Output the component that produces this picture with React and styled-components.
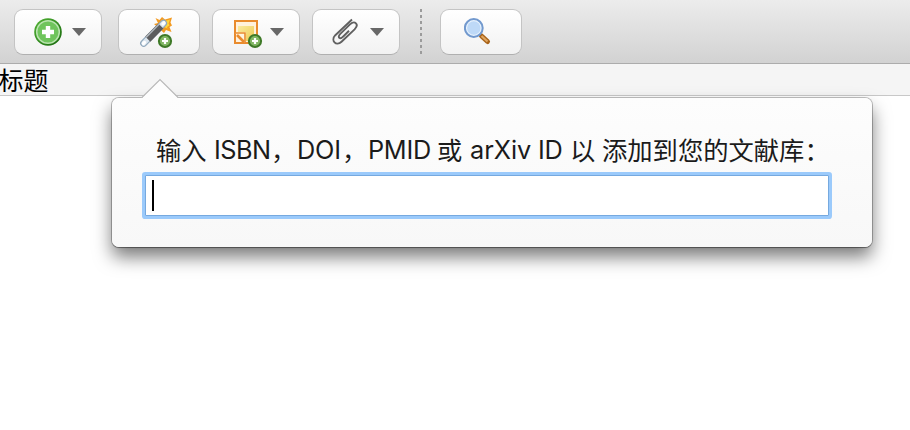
import React from "react";
import styled, { createGlobalStyle } from "styled-components";

const GlobalStyle = createGlobalStyle`
  * { box-sizing: border-box; }
  body {
    margin: 0;
    overflow: hidden;
    background: #fff;
    color: #1b1b1b;
    font-family: Inter, "Noto Sans CJK SC", sans-serif;
  }
`;

const Window = styled.main`
  position: relative;
  width: 910px;
  height: 430px;
  overflow: hidden;
  background: #fff;
`;

const Toolbar = styled.header`
  display: flex;
  align-items: flex-start;
  height: 64px;
  padding: 9px 0 0 14px;
  background: linear-gradient(#ececec, #d2d2d2);
  border-bottom: 1px solid #acacac;
`;

const ToolButton = styled.button`
  display: flex;
  align-items: center;
  width: ${(p) => (p.$menu ? 88 : 82)}px;
  height: 46px;
  margin: 0 ${(p) => p.$after || 0}px 0 0;
  padding: 0 0 0 ${(p) => p.$inset}px;
  border: 1px solid #c4c4c4;
  border-bottom-color: #b0b0b0;
  border-radius: 9px;
  background: linear-gradient(#fff, #f2f2f2);
`;

const Icon = styled.svg`
  display: block;
  flex: none;
`;

const Caret = styled.svg`
  display: block;
  flex: none;
  margin-left: ${(p) => p.$gap}px;
`;

const Separator = styled.div`
  width: 2px;
  height: 46px;
  margin-right: 18px;
  background: repeating-linear-gradient(#9b9b9b 0 3px, transparent 3px 6px);
`;

const ColumnHeader = styled.div`
  height: 32px;
  padding-top: 1px;
  background: #f5f5f5;
  border-bottom: 1px solid #c8c8c8;
  color: #000;
  font-size: 25px;
  line-height: 32px;
  text-indent: -1.5px;
`;

const Popover = styled.section`
  position: absolute;
  left: 112px;
  top: 98px;
  width: 760px;
  height: 149px;
  padding: 33px 40px 0 31px;
  border-radius: 7px;
  background: linear-gradient(#fdfdfd, #f8f8f8);
  box-shadow: 0 0 0 1px rgba(0, 0, 0, 0.24), 0 1px 1px rgba(0, 0, 0, 0.25),
    0 10px 18px rgba(0, 0, 0, 0.52);
`;

const Pointer = styled.svg`
  position: absolute;
  left: 28px;
  top: -20px;
`;

const Prompt = styled.label`
  display: flex;
  height: 37px;
  margin-left: 13px;
  font-size: 25.3px;
  line-height: 37px;
  white-space: pre;
`;

const Run = styled.span`
  flex: none;
  width: ${(p) => p.$width}px;
  letter-spacing: ${(p) => p.$tracking || 0}px;
  ${(p) => p.$cjk && 'font-family: "Noto Sans CJK SC", sans-serif;'}
`;

const Field = styled.div`
  display: flex;
  align-items: center;
  width: 684px;
  height: 41px;
  margin: 7px 0 0 2px;
  padding-left: 6px;
  border: 1px solid #76a9df;
  box-shadow: 0 0 0 3px #9bcafb;
  border-radius: 1px;
  background: #fff;
`;

const TextCursor = styled.span`
  width: 2px;
  height: 31px;
  background: #000;
`;

const runs = [
  { text: "输入", width: 58, cjk: true },
  { text: "ISBN", width: 57, tracking: -0.5 },
  { text: "，", width: 26, cjk: true },
  { text: "DOI", width: 45, tracking: -0.2 },
  { text: "，", width: 26, cjk: true },
  { text: "PMID", width: 69, tracking: -0.3 },
  { text: "或", width: 33, cjk: true },
  { text: "arXiv", width: 68, tracking: 0 },
  { text: "ID", width: 32, tracking: -0.3 },
  { text: "以", width: 32, cjk: true },
  { text: "添加到您的文献库：", width: 228, cjk: true },
];

function MenuCaret({ gap }) {
  return (
    <Caret $gap={gap} width="14" height="8" viewBox="0 0 14 8">
      <path d="M0 0H14L7 8Z" fill="#686868" />
    </Caret>
  );
}

function PlusBadge() {
  return (
    <g>
      <circle cx="25" cy="25" r="6.1" fill="#83b765" stroke="#3e7927" strokeWidth="2" />
      <path d="M25 22V28M22 25H28" stroke="#fff" strokeWidth="2.2" />
    </g>
  );
}

function AddIcon() {
  return (
    <Icon width="28" height="28" viewBox="0 0 28 28">
      <defs>
        <linearGradient id="addRim" x2="1" y2="1">
          <stop stopColor="#52b435" />
          <stop offset="1" stopColor="#17670d" />
        </linearGradient>
      </defs>
      <circle cx="14" cy="14" r="13.8" fill="url(#addRim)" />
      <circle cx="14" cy="14" r="11.3" fill="#6fc45c" stroke="#b9e3ae" strokeWidth="1.5" />
      <path d="M14 8V20M8 14H20" stroke="#fff" strokeWidth="4.4" />
    </Icon>
  );
}

function WandIcon() {
  return (
    <Icon width="34" height="34" viewBox="0 0 34 34">
      <path d="M16.5 3L20.5 5L23 2L26 4.5L33 2.5L31.5 7.5L33 10.5L30.5 12L32.5 17L27 15L25 18L15 9L19 8Z" fill="#f39a20" />
      <path d="M22 6L24 4.5L26 6L31 4.5L29.5 8.5L30.5 10.5L28 12L28.5 13.5L25 12Z" fill="#ffd53a" />
      <path d="M4.7 28.2L24.5 8.3" stroke="#91a8bc" strokeWidth="7.2" strokeLinecap="round" />
      <path d="M4.7 28.2L24.5 8.3" stroke="#dce6ef" strokeWidth="4.8" strokeLinecap="round" />
      <path d="M8.8 24.1L21.8 11" stroke="#5c5c5e" strokeWidth="7.2" />
      <path d="M7 22.4L20 9.3" stroke="#aeb4ba" strokeWidth="1.5" />
      <path d="M4.4 28.5L5.5 27.4M24 8.8L25 7.8" stroke="#fff" strokeWidth="3.2" strokeLinecap="round" />
      <g transform="translate(1 1)"><PlusBadge /></g>
    </Icon>
  );
}

function NoteIcon() {
  return (
    <Icon width="29" height="34" viewBox="0 0 29 34">
      <defs>
        <linearGradient id="noteFill" y2="1" x2="1">
          <stop stopColor="#faeaa0" />
          <stop offset="1" stopColor="#edca50" />
        </linearGradient>
      </defs>
      <rect x="1" y="6" width="22" height="22" fill="#fff1dc" stroke="#e98b2d" strokeWidth="2" />
      <path d="M4 11H20V26H12V17H4Z" fill="url(#noteFill)" />
      <path d="M1 18H11V28" fill="#fff4df" stroke="#e98b2d" strokeWidth="1.6" />
      <path d="M3 20L10 27" stroke="#e98b2d" strokeWidth="2.6" />
      <g transform="translate(-4 1)"><PlusBadge /></g>
    </Icon>
  );
}

function ClipIcon() {
  return (
    <Icon width="27" height="28" viewBox="0 0 27 28">
      <path
        d="M20 1.5L3.3 17.2C-1.7 22.5 4.2 28.9 9.5 23.7L22.6 11.4C27.5 6.4 22.8 1.9 18 6.4L8.3 15.9C4.9 19.4 8 21.8 11 18.7L17 12.8"
        fill="none"
        stroke="#606060"
        strokeWidth="1.9"
        strokeLinejoin="round"
      />
    </Icon>
  );
}

function SearchIcon() {
  return (
    <Icon width="28" height="28" viewBox="0 0 28 28">
      <path d="M17.5 18L23.5 23.5" stroke="#a96318" strokeWidth="5" strokeLinecap="round" />
      <path d="M17.5 18L23.5 23.5" stroke="#dfa661" strokeWidth="2.2" />
      <circle cx="9.8" cy="10" r="8.9" fill="#e7f2fd" stroke="#7299ce" strokeWidth="2" />
      <circle cx="9.8" cy="10" r="6.7" fill="#bed9f7" />
    </Icon>
  );
}

export default function App() {
  return (
    <Window>
      <GlobalStyle />
      <Toolbar>
        <ToolButton $menu $inset={19} $after={16} aria-label="Add">
          <AddIcon />
          <MenuCaret gap={10} />
        </ToolButton>
        <ToolButton $inset={20} $after={12} aria-label="Identifier">
          <WandIcon />
        </ToolButton>
        <ToolButton $menu $inset={21} $after={12} aria-label="Note">
          <NoteIcon />
          <MenuCaret gap={7} />
        </ToolButton>
        <ToolButton $menu $inset={19} $after={20} aria-label="Attachment">
          <ClipIcon />
          <MenuCaret gap={11} />
        </ToolButton>
        <Separator />
        <ToolButton $inset={23} aria-label="Search">
          <SearchIcon />
        </ToolButton>
      </Toolbar>
      <ColumnHeader>标题</ColumnHeader>
      <Popover>
        <Pointer width="40" height="21" viewBox="0 0 40 21">
          <path d="M2 20L20 2L38 20V21H2Z" fill="#fdfdfd" />
          <path d="M1 19.5H2L20 1.5L38 19.5H39" fill="none" stroke="#b9b9b9" strokeWidth="1.2" />
        </Pointer>
        <Prompt>
          {runs.map((run, i) => (
            <Run key={i} $width={run.width} $tracking={run.tracking} $cjk={run.cjk}>
              {run.text}
            </Run>
          ))}
        </Prompt>
        <Field>
          <TextCursor />
        </Field>
      </Popover>
    </Window>
  );
}
